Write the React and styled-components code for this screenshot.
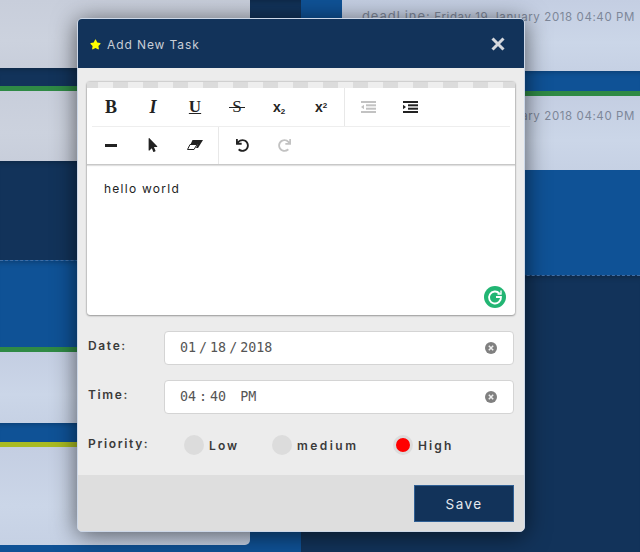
import React, { useState } from 'react'
import styled, { createGlobalStyle } from 'styled-components'
import { FaStar, FaUndo, FaRedo, FaMousePointer } from 'react-icons/fa'

const GlobalStyle = createGlobalStyle`
  html, body {
    margin: 0;
    padding: 0;
    background: #12355b;
    font-family: 'Inter', 'Liberation Sans', sans-serif;
  }
`

const navy = '#12335a'
const blue = '#0f5296'

const Page = styled.div`
  position: relative;
  width: 640px;
  height: 552px;
  overflow: hidden;
  display: grid;
  grid-template-columns: 250px 51px 339px;
`

const Column = styled.div`
  display: flex;
  flex-direction: column;
  height: 552px;
  background: ${p => p.$bg || navy};
`

const Band = styled.div`
  height: ${p => p.$h}px;
  flex: none;
  box-sizing: border-box;
  background: ${p => p.$bg};
  box-shadow: inset 0 6px 6px -6px rgba(0, 0, 0, 0.35);
  border-bottom: ${p => (p.$line ? `5px solid ${p.$line}` : 'none')};
  border-top: ${p => (p.$dashed ? '1px dashed #3f6ea6' : 'none')};
`

const Card = styled.div`
  height: ${p => p.$h}px;
  flex: none;
  box-sizing: border-box;
  background: ${p =>
    p.$gray
      ? 'linear-gradient(180deg, #c8cedb 0%, #ccd2de 60%, #c8cedb 100%)'
      : 'linear-gradient(180deg, #c4cee2 0%, #cbd6e8 60%, #c6d1e4 100%)'};
  border-radius: ${p => p.$radius || '0'};
  padding: ${p => p.$pad || 8}px 0 0 20px;
  white-space: nowrap;
  overflow: hidden;
  font-size: 11.5px;
  letter-spacing: 0.6px;
  color: #7d8799;
`

const DeadLabel = styled.span`
  font-size: 13px;
  letter-spacing: 0.9px;
`

const RightBlock = styled.div`
  display: flex;
  flex: none;
  height: 275px;
  background: ${blue};
`

const RightStack = styled.div`
  display: flex;
  flex-direction: column;
  flex: 1;
  margin-left: 41px;
`

const Modal = styled.div`
  position: absolute;
  left: 77px;
  top: 18px;
  width: 448px;
  height: 514px;
  box-sizing: border-box;
  border: 1px solid #cdd8e8;
  border-radius: 5px;
  background: #ececec;
  box-shadow: 0 3px 24px rgba(0, 0, 0, 0.6);
  display: flex;
  flex-direction: column;
  overflow: hidden;
`

const Header = styled.div`
  height: 49px;
  flex: none;
  box-sizing: border-box;
  background: ${navy};
  display: flex;
  align-items: center;
  padding: 1px 19px 0 12px;
  color: #c9ced6;
`

const Title = styled.div`
  flex: 1;
  margin-left: 6px;
  font-size: 12px;
  letter-spacing: 0.9px;
`

const CloseIcon = styled.svg`
  width: 14px;
  height: 14px;
  display: block;
`

const Body = styled.div`
  flex: 1;
  display: flex;
  flex-direction: column;
  padding: 14px 9px 0;
`

const Editor = styled.div`
  height: 233px;
  flex: none;
  background: #fff;
  border-radius: 3px;
  display: flex;
  flex-direction: column;
  box-shadow: 0 0 2px rgba(0, 0, 0, 0.4), 0 1px 2px rgba(0, 0, 0, 0.25);
`

const Stripe = styled.div`
  height: 6px;
  flex: none;
  background: repeating-linear-gradient(90deg, #dcdcdc 0 15px, #eeeeee 15px 30px);
  background-position: -4px 0;
  background-size: 30px 100%;
`

const Toolbar = styled.div`
  height: 77px;
  flex: none;
  box-sizing: border-box;
  padding: 0 5px;
  display: flex;
  flex-direction: column;
  border-bottom: 1px solid #c8c8c8;
  box-shadow: 0 1px 1px rgba(0, 0, 0, 0.12);
`

const ToolRow = styled.div`
  flex: 1;
  display: flex;
  align-items: stretch;
  border-bottom: ${p => (p.$first ? '1px solid #eeeeee' : 'none')};
`

const ToolGroup = styled.div`
  display: flex;
  padding: 1px ${p => (p.$sep ? 2 : 0)}px 1px ${p => (p.$sep ? 0 : 2)}px;
  margin-left: ${p => (p.$sep ? -2 : 0)}px;
  border-right: ${p => (p.$sep ? '1px solid #e8e8e8' : 'none')};
`

const Tool = styled.div`
  width: 42px;
  display: flex;
  align-items: center;
  justify-content: center;
  font-size: ${p => p.$size || 16}px;
  font-weight: 700;
  font-style: ${p => (p.$italic ? 'italic' : 'normal')};
  font-family: ${p => (p.$sans ? "'Liberation Sans', sans-serif" : "'Liberation Serif', serif")};
  text-decoration: ${p => p.$deco || 'none'};
  color: ${p => (p.$off ? '#c2c2c2' : '#222')};
  line-height: 1;

  sub, sup {
    font-size: 8px;
    line-height: 0;
  }

  sub {
    vertical-align: -2px;
  }

  sup {
    vertical-align: 4px;
  }
`

const StrikeLetter = styled.span`
  position: relative;
  font-weight: 400;

  &::after {
    content: '';
    position: absolute;
    left: -3px;
    right: -3px;
    top: 50%;
    height: 1px;
    background: #222;
  }
`

const Content = styled.div`
  flex: 1;
  position: relative;
  padding: 16px 17px;
  font-size: 12px;
  letter-spacing: 1.25px;
  color: #222;
`

const GrammarlyBadge = styled.svg`
  position: absolute;
  right: 9px;
  bottom: 7px;
  width: 22px;
  height: 22px;
`

const Field = styled.div`
  display: flex;
  align-items: flex-start;
  margin-top: ${p => p.$top}px;
`

const Label = styled.div`
  width: 77px;
  flex: none;
  padding-left: 1px;
  padding-top: ${p => p.$pad || 7}px;
  box-sizing: border-box;
  font-size: 12px;
  font-weight: 600;
  letter-spacing: 1.65px;
  color: #3a3a3a;
`

const DateBox = styled.div`
  flex: 1;
  height: 34px;
  box-sizing: border-box;
  background: #fff;
  border: 1px solid #d4d4d4;
  border-radius: 4px;
  display: flex;
  align-items: center;
  justify-content: space-between;
  padding: 0 16px;
  margin-right: 1px;
  font-family: 'DejaVu Sans Mono', monospace;
  font-size: 13.33px;
  color: #555;
`

const Segments = styled.div`
  display: flex;
  gap: 3px;
  white-space: pre;
  margin: -1px 0 0 -1px;
  padding-bottom: 1px;
`

const ClearIcon = styled.svg`
  width: 12px;
  height: 12px;
  display: block;
`

const Radios = styled.div`
  display: flex;
  margin-left: 20px;
`

const RadioLabel = styled.label`
  display: flex;
  align-items: center;
  gap: 5px;
  width: ${p => p.$w}px;
  font-size: 12px;
  font-weight: 600;
  letter-spacing: ${p => p.$track}px;
  color: #3a3a3a;
  cursor: pointer;
`

const RadioDot = styled.span`
  width: 20px;
  height: 20px;
  flex: none;
  box-sizing: border-box;
  border-radius: 50%;
  background: ${p => (p.$on ? '#ff0000' : '#dcdcdc')};
  border: ${p => (p.$on ? '3px solid #dcdcdc' : 'none')};
`

const Footer = styled.div`
  height: 56px;
  flex: none;
  box-sizing: border-box;
  background: #dedede;
  padding: 10px 10px 0 0;
  display: flex;
  justify-content: flex-end;
  align-items: flex-start;
`

const SaveButton = styled.button`
  width: 100px;
  height: 37px;
  background: ${navy};
  border: 1px solid #2f5f94;
  color: #e6e9ee;
  font-family: inherit;
  font-size: 13.5px;
  letter-spacing: 1.4px;
`

function OutdentIcon({ color }) {
  return (
    <svg width="15" height="12" viewBox="0 0 15 12" fill={color}>
      <rect x="0" y="0" width="15" height="2" />
      <rect x="5" y="3.3" width="10" height="2" />
      <rect x="5" y="6.7" width="10" height="2" />
      <rect x="0" y="10" width="15" height="2" />
      <path d="M0 6 L3 3.8 V8.2 Z" />
    </svg>
  )
}

function IndentIcon({ color }) {
  return (
    <svg width="15" height="12" viewBox="0 0 15 12" fill={color}>
      <rect x="0" y="0" width="15" height="2" />
      <rect x="5" y="3.3" width="10" height="2" />
      <rect x="5" y="6.7" width="10" height="2" />
      <rect x="0" y="10" width="15" height="2" />
      <path d="M3 6 L0 3.8 V8.2 Z" />
    </svg>
  )
}

function EraserIcon() {
  return (
    <svg width="16" height="10" viewBox="0 0 16 10">
      <path d="M5.5 0 H16 L11 8 H9 L10.5 4.5 H3.5 Z" fill="#222" />
      <path d="M3 4.5 H10 L7 9.5 H0.5 Z" fill="#fff" stroke="#222" strokeWidth="1" />
    </svg>
  )
}

function Clear() {
  return (
    <ClearIcon viewBox="0 0 12 12">
      <circle cx="6" cy="6" r="6" fill="#808080" />
      <path d="M3.8 3.8 L8.2 8.2 M8.2 3.8 L3.8 8.2" stroke="#eee" strokeWidth="1.5" />
    </ClearIcon>
  )
}

const priorities = [
  { name: 'Low', width: 88, track: 2.1 },
  { name: 'medium', width: 121, track: 2.45 },
  { name: 'High', width: 70, track: 2.1 },
]

export default function App() {
  const [priority, setPriority] = useState('High')

  return (
    <Page>
      <GlobalStyle />

      <Column $bg={blue}>
        <Card $h={68} $gray />
        <Band $h={23} $bg={navy} $line="#2f8a45" />
        <Card $h={70} $gray />
        <Band $h={99} $bg={navy} />
        <Band $h={92} $bg={blue} $line="#2f8a45" $dashed />
        <Card $h={71} />
        <Band $h={24} $bg={blue} $line="#a9bb22" />
        <Card $h={98} $radius="0 0 5px 0" />
      </Column>

      <Column $bg={blue}>
        <Band $h={280} $bg={navy} />
      </Column>

      <Column>
        <RightBlock>
          <RightStack>
            <Card $h={71}>
              <DeadLabel>deadLine:</DeadLabel> Friday 19 January 2018 04:40 PM
            </Card>
            <Band $h={25} $bg={blue} $line="#2f8a45" />
            <Card $h={74} $pad={11}>
              <DeadLabel>deadLine:</DeadLabel> Friday 19 January 2018 04:40 PM
            </Card>
          </RightStack>
        </RightBlock>
        <Band $h={277} $bg={navy} $dashed />
      </Column>

      <Modal>
        <Header>
          <FaStar size={11} color="#ffff00" />
          <Title>Add New Task</Title>
          <CloseIcon viewBox="0 0 14 14">
            <path d="M1.5 1.5 L12.5 12.5 M12.5 1.5 L1.5 12.5" stroke="#d5d8dd" strokeWidth="3" />
          </CloseIcon>
        </Header>

        <Body>
          <Editor>
            <Stripe />
            <Toolbar>
              <ToolRow $first>
                <ToolGroup $sep>
                  <Tool $size={18}>B</Tool>
                  <Tool $size={18} $italic>I</Tool>
                  <Tool $size={17} $deco="underline">U</Tool>
                  <Tool $size={17}><StrikeLetter>S</StrikeLetter></Tool>
                  <Tool $sans $size={14}><span>x<sub>2</sub></span></Tool>
                  <Tool $sans $size={14}><span>x<sup>2</sup></span></Tool>
                </ToolGroup>
                <ToolGroup>
                  <Tool><OutdentIcon color="#c2c2c2" /></Tool>
                  <Tool><IndentIcon color="#222" /></Tool>
                </ToolGroup>
              </ToolRow>
              <ToolRow>
                <ToolGroup $sep>
                  <Tool>
                    <svg width="12" height="3" viewBox="0 0 12 3"><rect width="12" height="3" fill="#222" /></svg>
                  </Tool>
                  <Tool><FaMousePointer size={14} color="#222" /></Tool>
                  <Tool><EraserIcon /></Tool>
                </ToolGroup>
                <ToolGroup>
                  <Tool><FaUndo size={13} color="#222" /></Tool>
                  <Tool $off><FaRedo size={13} color="#c2c2c2" /></Tool>
                </ToolGroup>
              </ToolRow>
            </Toolbar>
            <Content>
              hello world
              <GrammarlyBadge viewBox="0 0 22 22">
                <circle cx="11" cy="11" r="11" fill="#22b573" />
                <path d="M15.5 7.5 A6 6 0 1 0 17 11 H12" fill="none" stroke="#fff" strokeWidth="1.8" />
                <path d="M13.5 8 H17 V4.5" fill="none" stroke="#fff" strokeWidth="1.4" />
              </GrammarlyBadge>
            </Content>
          </Editor>

          <Field $top={16}>
            <Label>Date:</Label>
            <DateBox>
              <Segments>
                <span>01</span><span>/</span><span>18</span><span>/</span><span>2018</span>
              </Segments>
              <Clear />
            </DateBox>
          </Field>

          <Field $top={15}>
            <Label>Time:</Label>
            <DateBox>
              <Segments>
                <span>04</span><span>:</span><span>40</span><span> </span><span>PM</span>
              </Segments>
              <Clear />
            </DateBox>
          </Field>

          <Field $top={21}>
            <Label $pad={1}>Priority:</Label>
            <Radios>
              {priorities.map(({ name, width, track }) => (
                <RadioLabel key={name} $w={width} $track={track} onClick={() => setPriority(name)}>
                  <RadioDot $on={priority === name} />
                  {name}
                </RadioLabel>
              ))}
            </Radios>
          </Field>
        </Body>

        <Footer>
          <SaveButton>Save</SaveButton>
        </Footer>
      </Modal>
    </Page>
  )
}
